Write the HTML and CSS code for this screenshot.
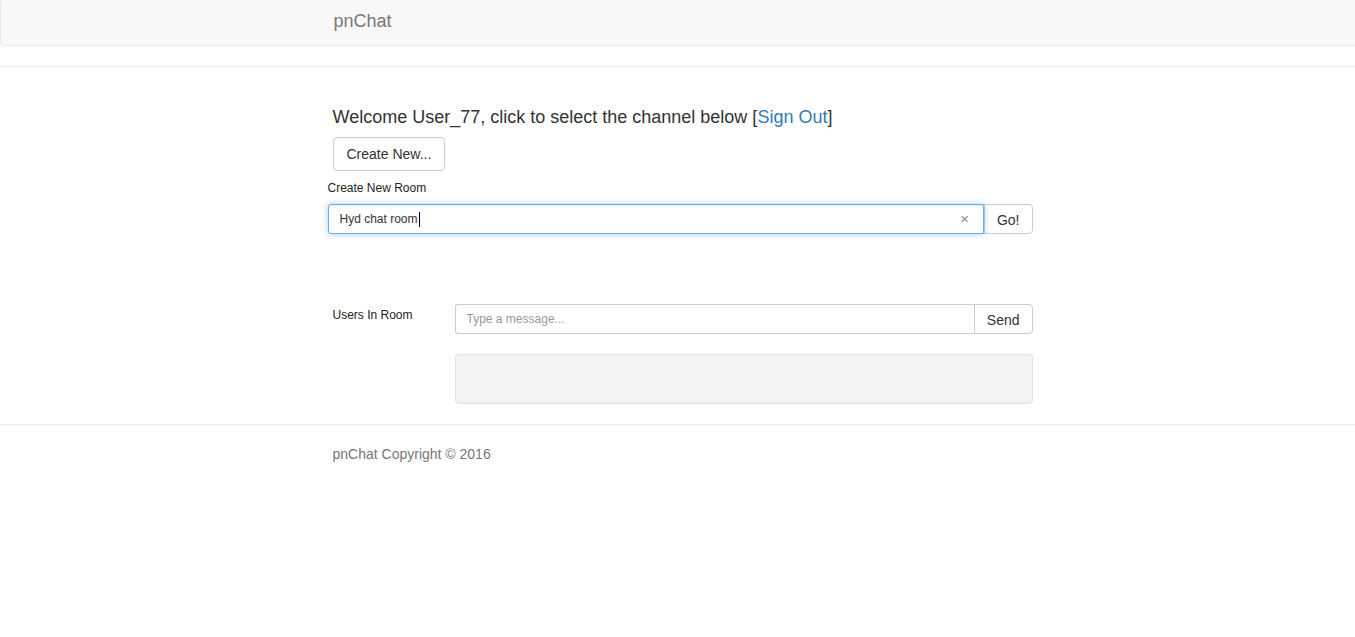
FILE: index.html
```html
<!DOCTYPE html>
<html>
<head>
<meta charset="utf-8">
<title>pnChat</title>
<link rel="stylesheet" href="styles.css">
</head>
<body>
<nav class="navbar">
  <div class="container"><div class="col"><span class="brand">pnChat</span></div></div>
</nav>
<hr class="rule top-rule">
<main class="container">
  <div class="col">
    <h3 class="welcome">Welcome User_77, click to select the channel below [<a href="#">Sign Out</a>]</h3>
    <button class="btn create-btn">Create New...</button>
    <div class="create-form">
      <label class="small-label">Create New Room</label>
      <div class="input-group">
        <div class="input-wrap focused">
          <input class="field" type="text" value="Hyd chat room">
          <span class="caret-bar"></span>
          <span class="clear">×</span>
        </div>
        <button class="btn addon">Go!</button>
      </div>
    </div>
    <div class="chat-row">
      <div class="users"><span class="small-label">Users In Room</span></div>
      <div class="chat-main">
        <div class="input-group">
          <div class="input-wrap">
            <input class="field" type="text" placeholder="Type a message...">
          </div>
          <button class="btn addon">Send</button>
        </div>
        <div class="messages"></div>
      </div>
    </div>
  </div>
</main>
<hr class="rule bottom-rule">
<footer class="container">
  <div class="col"><p class="copy">pnChat Copyright © 2016</p></div>
</footer>
</body>
</html>
```
FILE: styles.css
```css
* { box-sizing: border-box; }
html, body { margin: 0; padding: 0; background: #fff; }
body {
  font-family: "Liberation Sans", Arial, sans-serif;
  font-size: 14px;
  color: #333;
  overflow: hidden;
}
.container { width: 1170px; margin: 0 auto; padding: 0 15px; }
.col { margin-left: 225px; width: 700px; }

.navbar {
  height: 47px;
  margin-top: -1px;
  margin-right: -6px;
  background: #f8f8f8;
  border: 1px solid #e7e7e7;
  border-radius: 4px;
}
.brand {
  display: block;
  font-size: 18px;
  line-height: 20px;
  padding-top: 11px;
  margin-left: -2px;
  color: #777;
}

.rule { border: 0; border-top: 1px solid #eee; margin: 0; }
.top-rule { margin-top: 20px; }

.welcome {
  margin: 40px 0 0;
  font-size: 18px;
  font-weight: normal;
  line-height: 20px;
  color: #333;
}
.welcome a { color: #337ab7; text-decoration: none; }

.btn {
  font-family: inherit;
  font-size: 14px;
  color: #333;
  background: #fff;
  border: 1px solid #ccc;
  border-radius: 4px;
  cursor: pointer;
}
.create-btn { height: 34px; padding: 0 13px; margin-top: 10px; display: block; }

.create-form { margin-left: -5px; margin-top: 10px; width: 705px; }
.small-label { font-size: 12px; line-height: 14px; display: block; color: #222; }
.create-form .input-group { margin-top: 9px; }

.input-group { display: flex; height: 30px; }
.input-wrap {
  flex: 1;
  position: relative;
  border: 1px solid #ccc;
  border-right: 0;
  border-radius: 3px 0 0 3px;
  background: #fff;
}
.input-wrap.focused {
  border: 1px solid #66afe9;
  box-shadow: inset 0 1px 1px rgba(0,0,0,.075), 0 0 6px rgba(102,175,233,.6);
  z-index: 1;
}
.field {
  width: 100%;
  height: 100%;
  border: 0;
  outline: none;
  padding: 0 11px;
  font-family: inherit;
  font-size: 12px;
  color: #333;
  background: transparent;
}
.field::placeholder { color: #999; }
.caret-bar {
  position: absolute;
  left: 90px;
  top: 7px;
  width: 1px;
  height: 15px;
  background: #000;
}
.clear {
  position: absolute;
  right: 14px;
  top: 6px;
  font-size: 15px;
  line-height: 16px;
  color: #888;
}
.addon {
  height: 30px;
  padding: 1px 12px 0;
  border-radius: 0 4px 4px 0;
  line-height: 28px;
}

.chat-row { display: flex; margin-top: 70px; }
.users { width: 122px; padding-top: 4px; }
.chat-main { width: 578px; }
.messages {
  margin-top: 20px;
  height: 50px;
  background: #f4f4f4;
  border: 1px solid #e3e3e3;
  border-radius: 4px;
}

.bottom-rule { margin-top: 20px; }
.copy { margin: 20px 0 0; color: #777; font-size: 14px; line-height: 18px; }
```
